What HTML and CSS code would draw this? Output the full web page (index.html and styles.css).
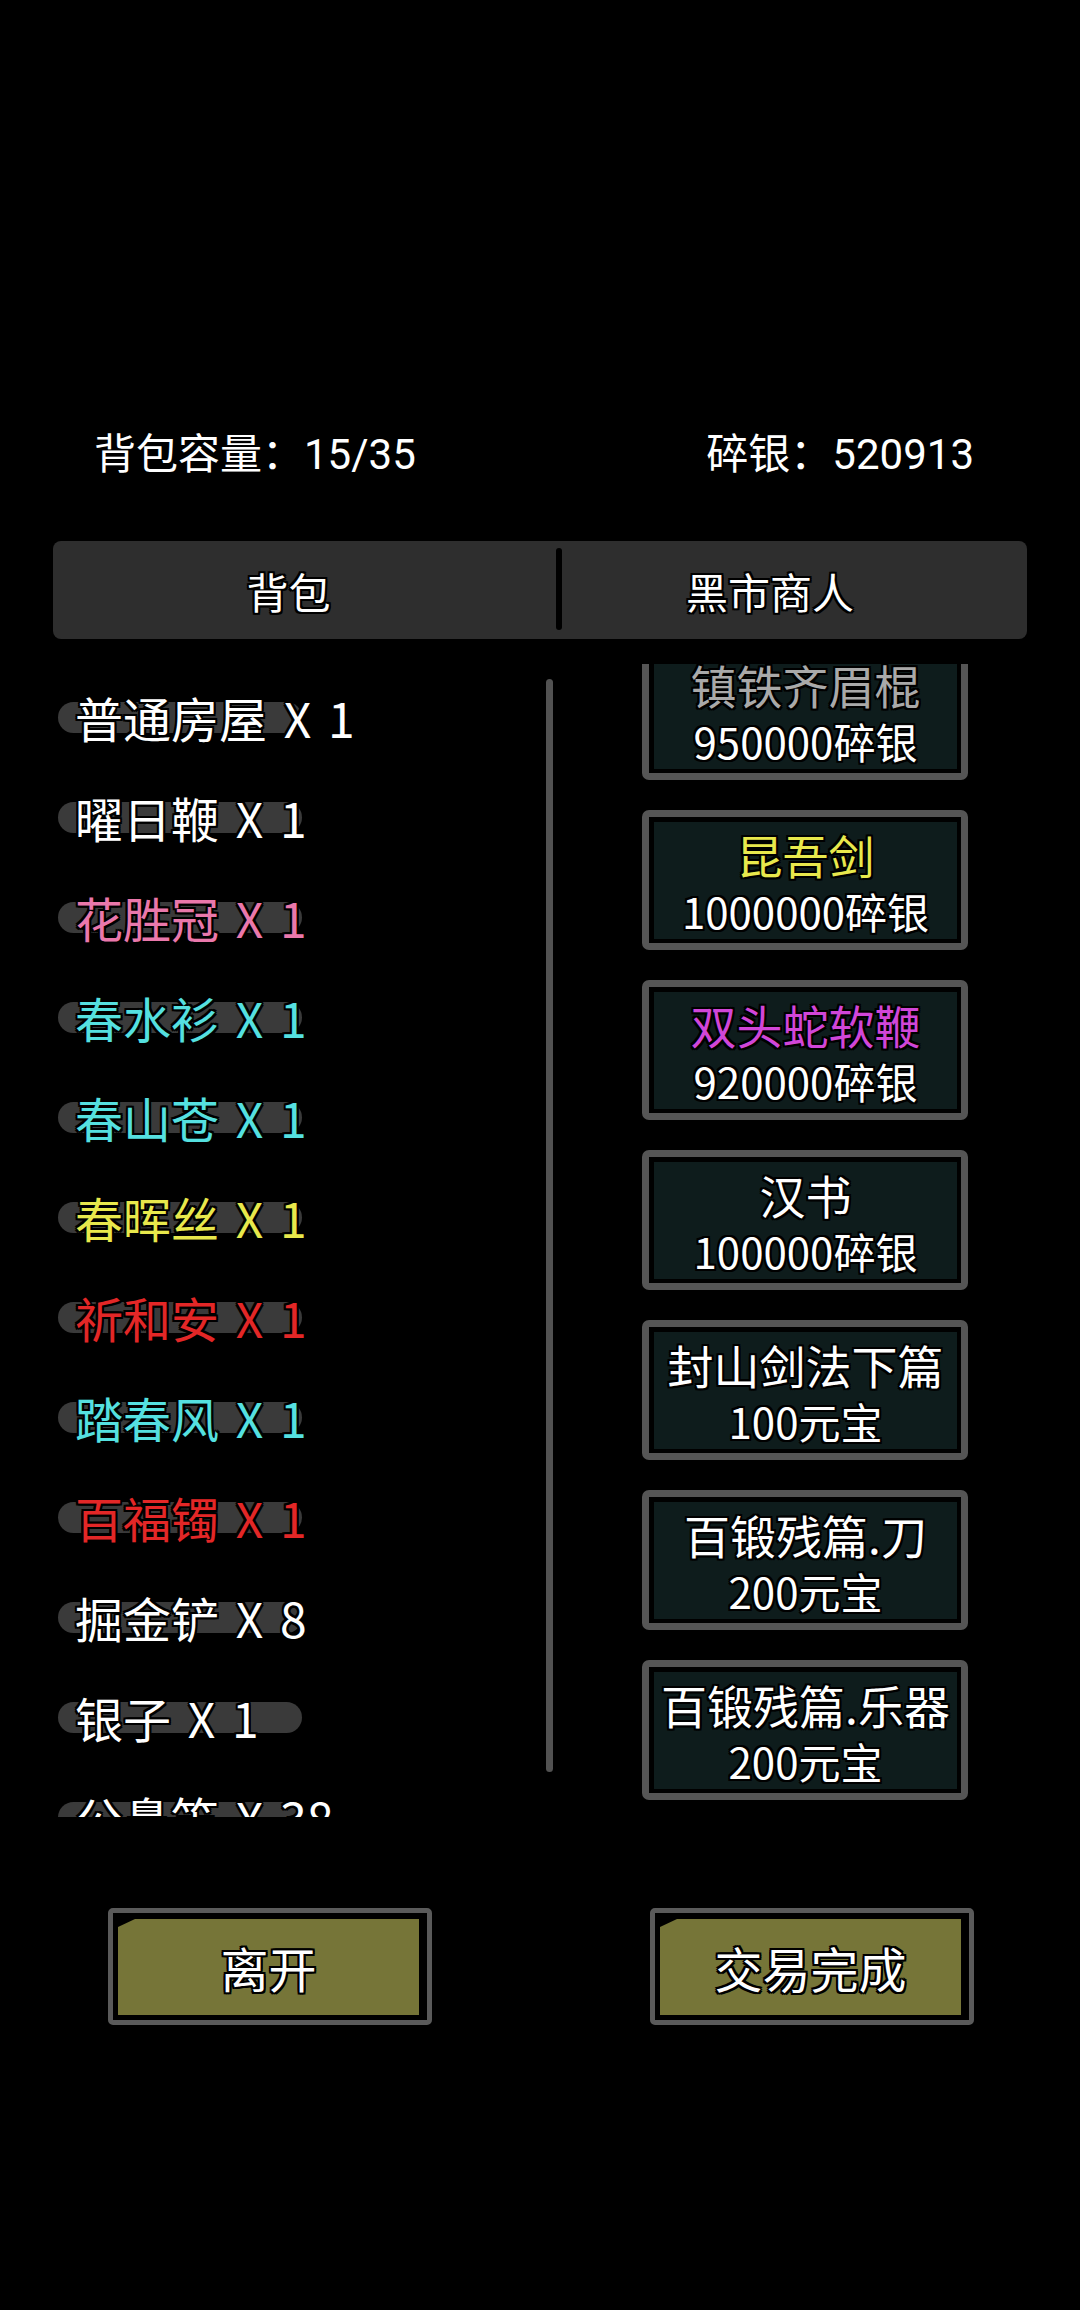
FILE: index.html
```html
<!DOCTYPE html>
<html lang="zh-CN">
<head>
    <meta charset="UTF-8">
    <meta name="viewport" content="width=device-width, initial-scale=1.0">
    <title>黑市商人</title>
    <link rel="stylesheet" href="styles.css">
</head>
<body>
    <div class="page">
        <div class="header">
            <span>背包容量：15/35</span>
            <span>碎银：520913</span>
        </div>

        <div class="tabs">
            <div class="tab tab-left">背包</div>
            <div class="tab-divider"></div>
            <div class="tab tab-right">黑市商人</div>
        </div>

        <div class="content">
            <div class="bag">
                <div class="bag-list">
                    <div class="item white"><span>普通房屋 X 1</span></div>
                    <div class="item white"><span>曜日鞭 X 1</span></div>
                    <div class="item pink"><span>花胜冠 X 1</span></div>
                    <div class="item cyan"><span>春水衫 X 1</span></div>
                    <div class="item cyan"><span>春山苍 X 1</span></div>
                    <div class="item yellow"><span>春晖丝 X 1</span></div>
                    <div class="item red"><span>祈和安 X 1</span></div>
                    <div class="item cyan"><span>踏春风 X 1</span></div>
                    <div class="item red"><span>百福镯 X 1</span></div>
                    <div class="item white"><span>掘金铲 X 8</span></div>
                    <div class="item white"><span>银子 X 1</span></div>
                    <div class="item white"><span>公鼻笛 X 38</span></div>
                </div>
                <div class="scrollbar"></div>
            </div>

            <div class="shop">
                <div class="card">
                    <div class="card-inner">
                        <div class="card-name grey">镇铁齐眉棍</div>
                        <div class="card-price">950000碎银</div>
                    </div>
                </div>
                <div class="card">
                    <div class="card-inner">
                        <div class="card-name yellow">昆吾剑</div>
                        <div class="card-price">1000000碎银</div>
                    </div>
                </div>
                <div class="card">
                    <div class="card-inner">
                        <div class="card-name magenta">双头蛇软鞭</div>
                        <div class="card-price">920000碎银</div>
                    </div>
                </div>
                <div class="card">
                    <div class="card-inner">
                        <div class="card-name">汉书</div>
                        <div class="card-price">100000碎银</div>
                    </div>
                </div>
                <div class="card">
                    <div class="card-inner">
                        <div class="card-name">封山剑法下篇</div>
                        <div class="card-price">100元宝</div>
                    </div>
                </div>
                <div class="card">
                    <div class="card-inner">
                        <div class="card-name">百锻残篇.刀</div>
                        <div class="card-price">200元宝</div>
                    </div>
                </div>
                <div class="card">
                    <div class="card-inner">
                        <div class="card-name">百锻残篇.乐器</div>
                        <div class="card-price">200元宝</div>
                    </div>
                </div>
            </div>
        </div>

        <div class="actions">
            <div class="btn"><div class="btn-face">离开</div></div>
            <div class="btn"><div class="btn-face">交易完成</div></div>
        </div>
    </div>
</body>
</html>
```

FILE: styles.css
```css
html, body {
    margin: 0;
    padding: 0;
    background: #000;
}
body {
    width: 1080px;
    height: 2310px;
    overflow: hidden;
    color: #fff;
    font-family: "Noto Sans CJK SC", sans-serif;
}
.page {
    padding-top: 430px;
}

.header {
    display: flex;
    justify-content: space-between;
    padding: 0 106px 0 94px;
    height: 50px;
    line-height: 50px;
    font-family: Roboto, "Noto Sans CJK SC", sans-serif;
    font-size: 42px;
}

.tabs {
    display: flex;
    margin: 61px 53px 0;
    height: 98px;
    background: #2e2e2e;
    border-radius: 8px;
}
.tab {
    display: flex;
    align-items: center;
    justify-content: center;
    font-size: 42px;
    text-shadow: -2px 0 #000, 2px 0 #000, 0 -2px #000, 0 2px #000,
        -2px -2px #000, 2px 2px #000, -2px 2px #000, 2px -2px #000;
}
.tab-left {
    width: 503px;
    padding-right: 32px;
    box-sizing: border-box;
}
.tab-right {
    flex: 1;
    padding-right: 49px;
}
.tab-divider {
    width: 6px;
    height: 82px;
    margin-top: 7px;
    background: #000;
    border-radius: 3px;
}

.content {
    display: flex;
    margin-top: 25px;
    height: 1153px;
    overflow: hidden;
}
.bag {
    display: flex;
    width: 553px;
}
.bag-list {
    flex: 1;
    padding-top: 3px;
}
.item {
    position: relative;
    display: flex;
    align-items: center;
    height: 100px;
    padding-left: 75px;
    font-size: 48px;
    word-spacing: 6px;
    white-space: nowrap;
}
.item::before {
    content: "";
    position: absolute;
    left: 58px;
    top: 35px;
    width: 244px;
    height: 31px;
    background: #3a3a3a;
    border-radius: 16px;
}
.item span {
    position: relative;
    text-shadow: -2px 0 #000, 2px 0 #000, 0 -2px #000, 0 2px #000,
        -2px -2px #000, 2px 2px #000, -2px 2px #000, 2px -2px #000;
}
.scrollbar {
    width: 7px;
    height: 1093px;
    margin-top: 15px;
    background: #525252;
    border-radius: 4px;
}

.white { color: #fff; }
.pink { color: #ea78ab; }
.cyan { color: #55e0e0; }
.yellow { color: #e8e84c; }
.red { color: #e32727; }
.magenta { color: #d146d8; }
.grey { color: #a9a9a9; }

.shop {
    margin-left: 89px;
    width: 326px;
}
.card {
    height: 140px;
    margin-bottom: 30px;
    border: 7px solid #555;
    border-radius: 7px;
    padding: 5px 4px 4px 5px;
    box-sizing: border-box;
    background: #000;
}
.card:first-child {
    margin-top: -24px;
}
.card-inner {
    height: 100%;
    display: flex;
    flex-direction: column;
    align-items: center;
    justify-content: center;
    padding-top: 4px;
    box-sizing: border-box;
    background: #0e1c1c;
    text-shadow: -2px 0 #000, 2px 0 #000, 0 -2px #000, 0 2px #000,
        -2px -2px #000, 2px 2px #000, -2px 2px #000, 2px -2px #000;
    white-space: nowrap;
}
.card-name {
    font-size: 46px;
    line-height: 56px;
}
.card-price {
    font-size: 42px;
    line-height: 58px;
    color: #fff;
}

.actions {
    display: flex;
    gap: 218px;
    margin-top: 91px;
    padding-left: 108px;
}
.btn {
    width: 324px;
    height: 117px;
    border: 5px solid #5a5a5a;
    border-radius: 5px;
    padding: 6px 8px 5px 5px;
    box-sizing: border-box;
    background: #000;
}
.btn-face {
    height: 100%;
    display: flex;
    align-items: center;
    justify-content: center;
    background: #767538;
    clip-path: polygon(0 8px, 17px 0, 100% 0, 100% 100%, 0 100%);
    font-size: 48px;
    text-shadow: -2px 0 #000, 2px 0 #000, 0 -2px #000, 0 2px #000,
        -2px -2px #000, 2px 2px #000, -2px 2px #000, 2px -2px #000;
}
```
